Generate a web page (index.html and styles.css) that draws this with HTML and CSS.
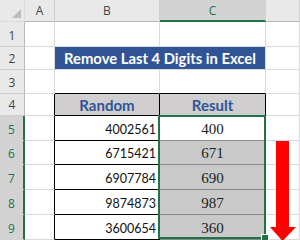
FILE: index.html
```html
<!DOCTYPE html>
<html lang="en">
<head>
    <meta charset="UTF-8">
    <meta name="viewport" content="width=device-width, initial-scale=1.0">
    <title>Remove Last 4 Digits in Excel</title>
    <link rel="stylesheet" href="styles.css">
</head>
<body>
    <div class="sheet">
        <!-- column headers -->
        <div class="hd corner"></div>
        <div class="hd col">A</div>
        <div class="hd col">B</div>
        <div class="hd col active">C</div>
        <div class="hd col"></div>

        <div class="hd row">1</div>
        <div class="cell"></div>
        <div class="cell"></div>
        <div class="cell"></div>
        <div class="cell"></div>

        <div class="hd row">2</div>
        <div class="cell"></div>
        <div class="cell title">Remove Last 4 Digits in Excel</div>
        <div class="cell"></div>

        <div class="hd row">3</div>
        <div class="cell"></div>
        <div class="cell edge-b"></div>
        <div class="cell edge-b"></div>
        <div class="cell"></div>

        <div class="hd row">4</div>
        <div class="cell edge-r"></div>
        <div class="cell th">Random</div>
        <div class="cell th">Result</div>
        <div class="cell"></div>

        <div class="hd row active">5</div>
        <div class="cell edge-r"></div>
        <div class="cell num">4002561</div>
        <div class="cell res current">
            400
            <div class="selection"><span class="handle"></span></div>
        </div>
        <div class="cell"></div>

        <div class="hd row active">6</div>
        <div class="cell edge-r"></div>
        <div class="cell num">6715421</div>
        <div class="cell res">671</div>
        <div class="cell arrow-cell">
            <svg class="arrow" width="34" height="100" viewBox="0 0 34 100">
                <polygon points="10,0 23,0 23,86 30,86 16.5,100 4,86 10,86" fill="#ff0000"/>
            </svg>
        </div>

        <div class="hd row active">7</div>
        <div class="cell edge-r"></div>
        <div class="cell num">6907784</div>
        <div class="cell res">690</div>
        <div class="cell"></div>

        <div class="hd row active">8</div>
        <div class="cell edge-r"></div>
        <div class="cell num">9874873</div>
        <div class="cell res">987</div>
        <div class="cell"></div>

        <div class="hd row active">9</div>
        <div class="cell edge-r"></div>
        <div class="cell num">3600654</div>
        <div class="cell res">360</div>
        <div class="cell"></div>
    </div>
</body>
</html>
```

FILE: styles.css
```css
body {
    margin: 0;
    background: #fff;
    overflow: hidden;
}

.sheet {
    display: grid;
    grid-template-columns: 25px 30px 105px 106px 34px;
    grid-template-rows: 22px 25px 23px 24px 22px 25px 24px 25px 25px 25px;
    width: 300px;
    height: 240px;
}

.sheet > div {
    box-sizing: border-box;
    border-right: 1px solid #dadada;
    border-bottom: 1px solid #dadada;
    display: flex;
}

/* headers */
.hd {
    background: #e9e9e9;
    color: #444;
    font-family: "Open Sans", sans-serif;
    font-size: 12px;
    justify-content: center;
}

.hd.col {
    align-items: center;
    border-bottom-color: #b8b8b8;
    border-right-color: #d0d0d0;
}

.hd.row {
    align-items: flex-end;
    padding-bottom: 2px;
    border-right-color: #b8b8b8;
    border-bottom-color: #d0d0d0;
}

.hd.active {
    background: #d3d3d3;
    color: #217346;
}

.sheet > .hd.col.active {
    border-bottom: 2px solid #217346;
}

.sheet > .hd.row.active {
    border-right: 2px solid #217346;
}

.corner {
    position: relative;
    border-bottom-color: #b8b8b8;
    border-right-color: #b8b8b8;
}

.corner::after {
    content: "";
    position: absolute;
    right: 3px;
    bottom: 3px;
    border-left: 9px solid transparent;
    border-bottom: 9px solid #bcbcbc;
}

/* cells */
.title {
    grid-column: span 2;
    background: #305496;
    color: #fff;
    font-family: Lato, sans-serif;
    font-weight: bold;
    font-size: 14.8px;
    align-items: center;
    justify-content: center;
}

.sheet > .edge-b {
    border-bottom-color: #000;
}

.sheet > .edge-r {
    border-right-color: #000;
}

.sheet > .th,
.sheet > .num,
.sheet > .res {
    border-right-color: #000;
    border-bottom-color: #000;
}

.th {
    background: #d0cece;
    color: #2f5597;
    font-family: Lato, sans-serif;
    font-weight: bold;
    font-size: 15px;
    align-items: flex-end;
    justify-content: center;
    padding-bottom: 1px;
}

.num {
    font-family: Lato, sans-serif;
    font-size: 12.5px;
    color: #111;
    align-items: flex-end;
    justify-content: flex-end;
    padding: 0 3px 3px 0;
}

.res {
    position: relative;
    background: #c9c9c9;
    font-family: "Liberation Serif", serif;
    font-size: 15px;
    color: #222;
    align-items: flex-end;
    justify-content: center;
    padding-bottom: 2px;
}

.sheet > .res {
    border-bottom-color: #8a8a8a;
}

.res.current {
    background: #fff;
}

/* selection frame over C5:C9 */
.selection {
    position: absolute;
    left: -2px;
    top: -1px;
    width: 108px;
    height: 124px;
    box-sizing: border-box;
    border: 2px solid #217346;
    z-index: 2;
}

.handle {
    position: absolute;
    right: -5px;
    bottom: -5px;
    width: 6px;
    height: 6px;
    background: #217346;
    border: 1px solid #fff;
}

.arrow-cell {
    position: relative;
}

.arrow {
    position: absolute;
    left: 0;
    top: 0;
    z-index: 1;
}
```
